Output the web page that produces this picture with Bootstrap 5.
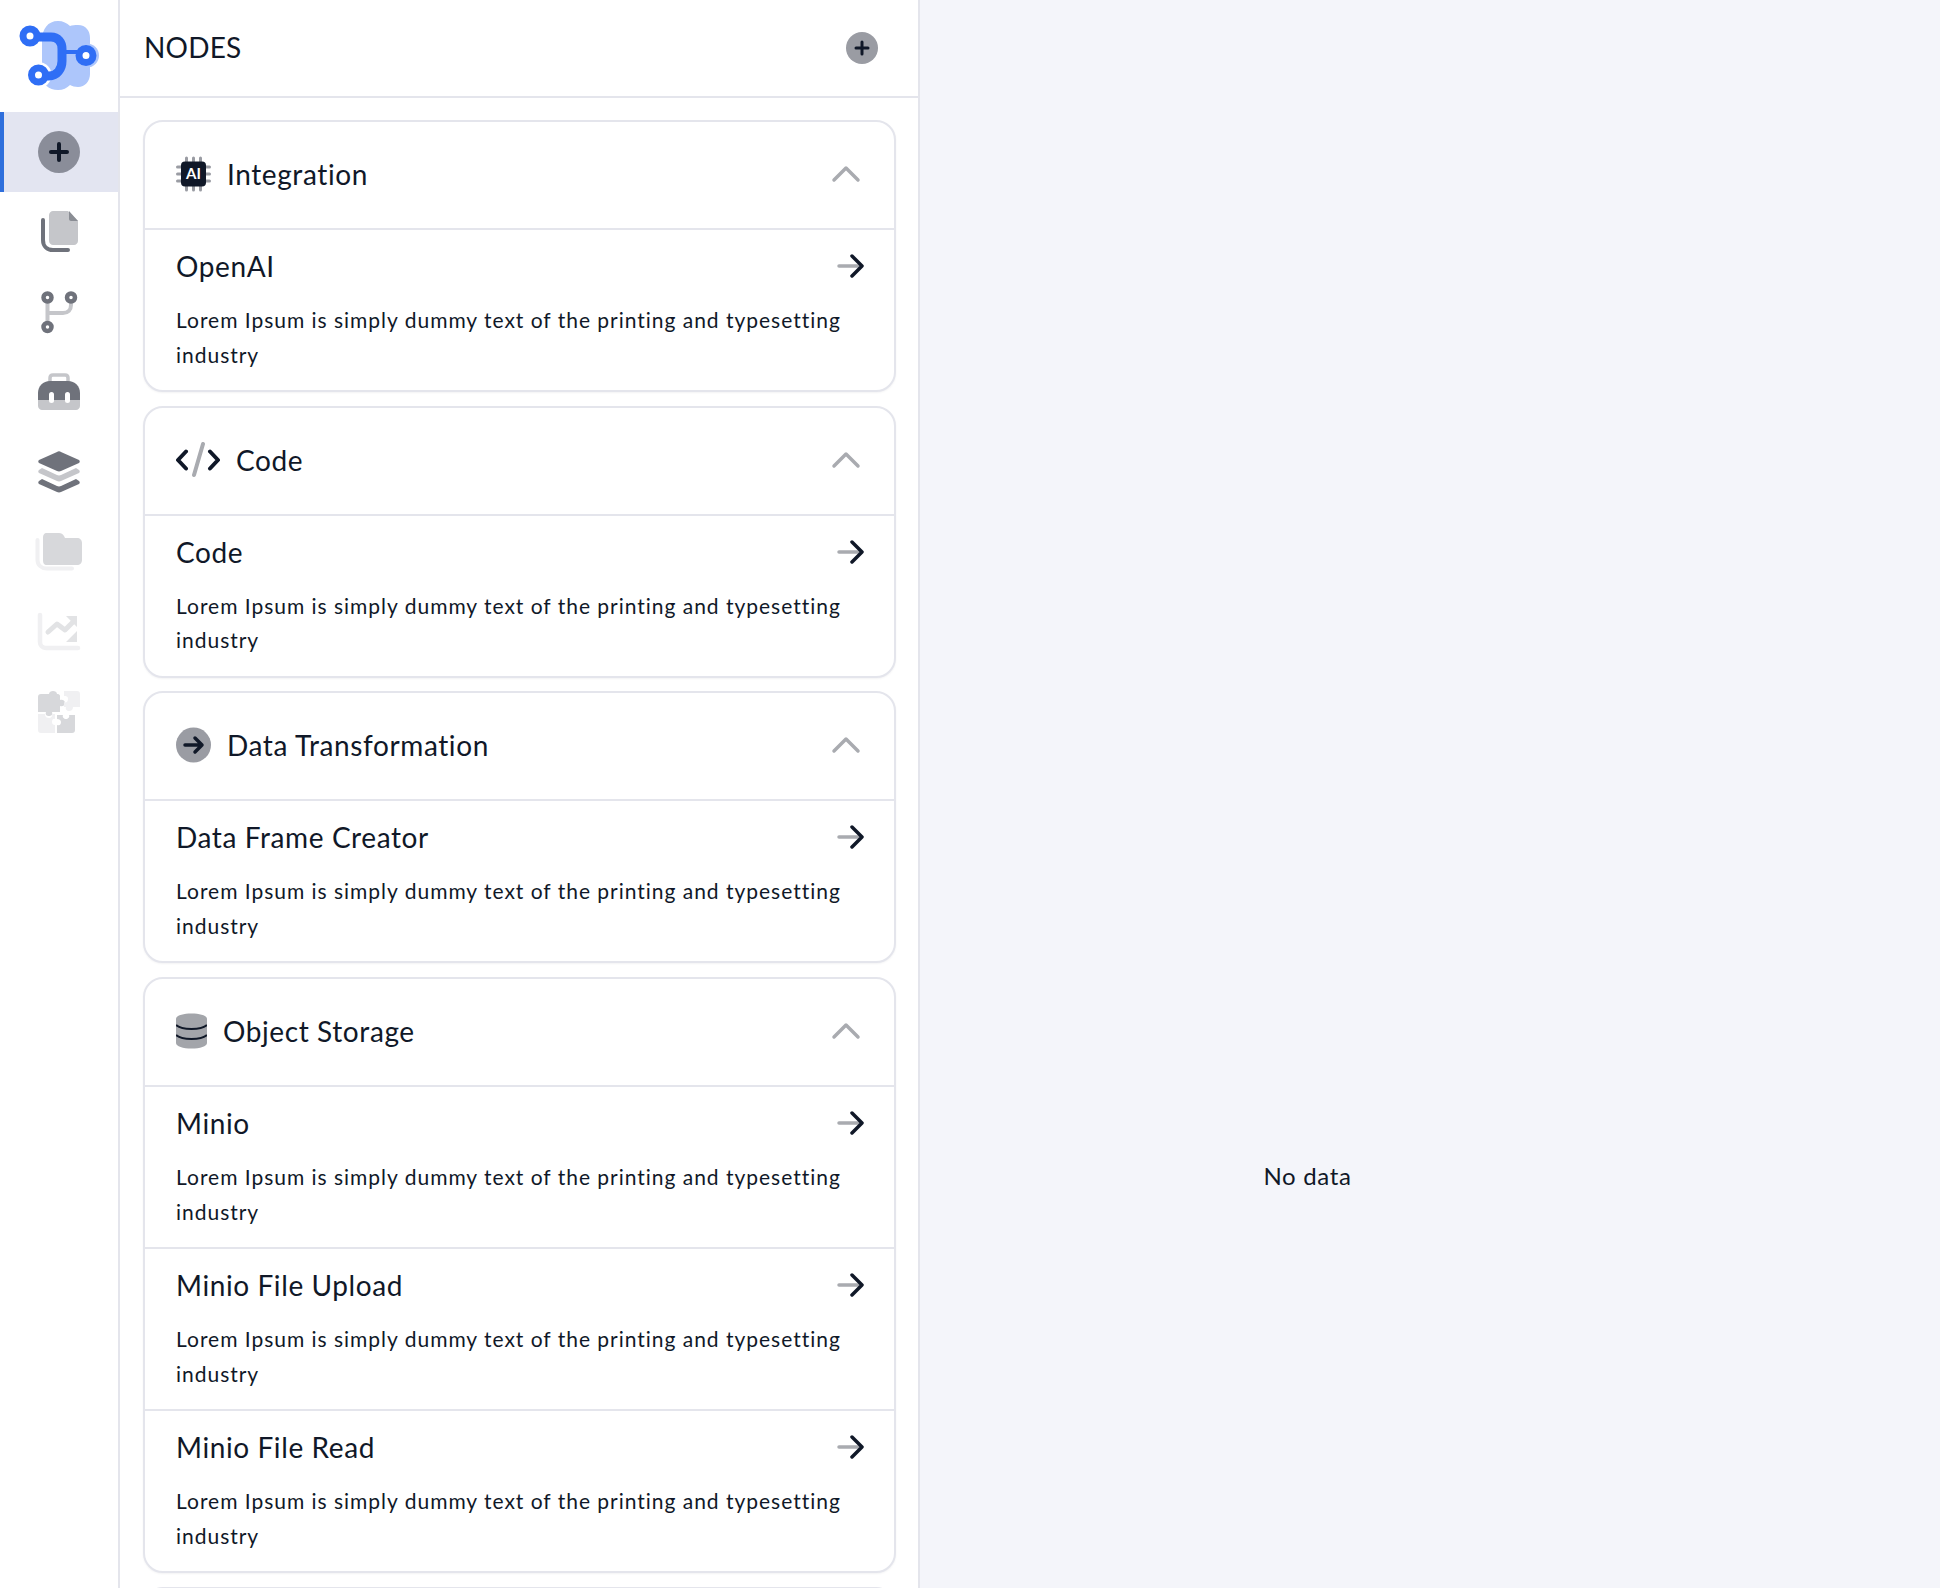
<!DOCTYPE html>
<html lang="en">
<head>
<meta charset="utf-8">
<title>Nodes</title>
<link href="https://cdn.jsdelivr.net/npm/bootstrap@5.3.0/dist/css/bootstrap.min.css" rel="stylesheet">
<style>
html,body{height:100%;}
body{font-family:Lato,"Liberation Sans",sans-serif;color:#101828;background:#f4f5fa;overflow:hidden;}
svg{display:block;flex:none;}
.side-rail{width:120px;flex:none;background:#fff;border-right:2px solid #e4e5ec;}
.rail-logo{height:112px;}
.rail-item{height:80px;}
.rail-item.is-on{background:#e3e5f1;box-shadow:inset 4px 0 0 #2f6fdc;}
.node-panel{width:800px;flex:none;background:#fff;border-right:2px solid #e4e5ec;}
.panel-head{height:98px;flex:none;padding:0 40px 0 24px;border-bottom:2px solid #e4e5ec;}
.panel-title{font-size:28px;line-height:36px;margin:0 0 2px;font-weight:400;letter-spacing:.2px;}
.panel-body-area{padding:22px 22.5px 0;gap:13.7px;overflow:hidden;flex:1 1 auto;min-height:0;}
.group-card{border:2px solid #e4e5ec;border-radius:20px;background:#fff;box-shadow:0 1px 2px rgba(16,24,40,.05);flex:none;overflow:hidden;}
.group-head{height:108px;padding:0 31.5px 2px;border-bottom:2px solid #e4e5ec;}
.group-name{font-size:28px;line-height:36px;letter-spacing:.6px;}
.group-item{height:160px;padding:18px 31.5px 0;}
.group-item+.group-item{height:162px;border-top:2px solid #e4e5ec;}
.item-name{font-size:28px;line-height:36px;letter-spacing:.6px;margin-bottom:19px;}
.item-text{font-size:21px;line-height:34.5px;letter-spacing:.98px;margin:0;}
.stub-card{height:120px;}
.empty-area{padding:764px 245px 0 0;font-size:24px;letter-spacing:.65px;}
.chip-label{font:700 15px Lato,"Liberation Sans",sans-serif;fill:#fff;}
.fold-mark{margin-right:1px;}
.go-mark{margin-right:-2.5px;}
</style>
</head>
<body>
<div class="d-flex vh-100 overflow-hidden">
  <nav class="side-rail d-flex flex-column">
    <div class="rail-logo">
      <svg width="118" height="112" viewBox="0 0 118 112" aria-label="logo">
        <path fill="#adc6fb" d="M42 40c0-11 6-19 16-19 5 0 9 2 12 5 2-1 5-1 8-1 8 0 12 6 12 13v36c0 7-5 13-12 13-3 0-6-1-8-2-3 3-7 5-12 5-9 0-16-6-16-14z"/>
        <circle cx="87" cy="55.500" r="12" fill="#adc6fb"/>
        <circle cx="38.500" cy="75" r="13" fill="#fff"/>
        <path fill="none" stroke="#2f6ef5" stroke-width="4" d="M62 52h15"/>
        <path fill="none" stroke="#2f6ef5" stroke-width="9" d="M34 37h17c7 0 11 5 11 12v12c0 8-5 15-13 15H42"/>
        <circle cx="30" cy="36" r="7" fill="#fff" stroke="#2f6ef5" stroke-width="7"/>
        <circle cx="38.500" cy="75" r="7" fill="#fff" stroke="#2f6ef5" stroke-width="7"/>
        <circle cx="86" cy="55.500" r="7" fill="#fff" stroke="#2f6ef5" stroke-width="7"/>
      </svg>
    </div>
    <div class="rail-item is-on">
      <svg width="118" height="80" viewBox="0 112 118 80">
        <circle cx="59" cy="152" r="21" fill="#8a8d99"/>
        <path stroke="#101828" stroke-width="4" stroke-linecap="round" d="M59 144v16M51 152h16"/>
      </svg>
    </div>
    <div class="rail-item">
      <svg width="118" height="80" viewBox="0 192 118 80">
        <path fill="none" stroke="#6f727b" stroke-width="4" stroke-linecap="round" d="M43 220v20c0 6 4 10 10 10h15"/>
        <path fill="#c5c6ca" d="M53 211h15l10 10v20c0 2-2 4-4 4H53c-2 0-4-2-4-4v-26c0-2 2-4 4-4z"/>
        <path fill="#8a8d94" d="M69 211l9 10h-7c-1 0-2-1-2-2z"/>
      </svg>
    </div>
    <div class="rail-item">
      <svg width="118" height="80" viewBox="0 272 118 80">
        <path fill="none" stroke="#c5c6ca" stroke-width="4" d="M47.500 303v19M71 303v2c0 5-3 8-8 8H47.500"/>
        <g fill="#fff" stroke="#6f727b" stroke-width="4.500">
          <circle cx="47.500" cy="297.500" r="4"/>
          <circle cx="71" cy="297.500" r="4"/>
          <circle cx="47.500" cy="327" r="4"/>
        </g>
      </svg>
    </div>
    <div class="rail-item">
      <svg width="118" height="80" viewBox="0 352 118 80">
        <path fill="none" stroke="#c5c6ca" stroke-width="3.500" d="M50 384v-6c0-2 1-3 3-3h12c2 0 3 1 3 3v6"/>
        <path fill="#6f727b" d="M50 381h18c7 0 12 5 12 12v7H38v-7c0-7 5-12 12-12z"/>
        <path fill="#c5c6ca" d="M38 400h42v6c0 2-2 4-4 4H42c-2 0-4-2-4-4z"/>
        <rect x="49" y="392" width="5" height="11" rx="2.500" fill="#fff"/>
        <rect x="65" y="392" width="5" height="11" rx="2.500" fill="#fff"/>
      </svg>
    </div>
    <div class="rail-item">
      <svg width="118" height="80" viewBox="0 432 118 80">
        <path fill="#6f727b" d="M57 452c1-1 3-1 4 0l18 8c1 1 1 2 0 3l-18 8c-1 .5-3 .5-4 0l-18-8c-1-1-1-2 0-3z"/>
        <path fill="#c5c6ca" d="M42 468l15 7c1 .5 3 .5 4 0l15-7 3 2c1 1 1 2 0 3l-18 8c-1 .5-3 .5-4 0l-18-8c-1-1-1-2 0-3z"/>
        <path fill="#6f727b" d="M42 479l15 7c1 .5 3 .5 4 0l15-7 3 2c1 1 1 2 0 3l-18 8c-1 .5-3 .5-4 0l-18-8c-1-1-1-2 0-3z"/>
      </svg>
    </div>
    <div class="rail-item">
      <svg width="118" height="80" viewBox="0 512 118 80">
        <path fill="none" stroke="#f0f0f2" stroke-width="4" stroke-linecap="round" d="M37.500 540v20c0 5 4 8.500 9 8.500H72"/>
        <path fill="#d7d8db" d="M47 533h12c2 0 4 1 5 3l1 2h12c3 0 5 2 5 5v17c0 3-2 5-5 5H47c-3 0-4-2-4-5v-22c0-3 1-5 4-5z"/>
      </svg>
    </div>
    <div class="rail-item">
      <svg width="118" height="80" viewBox="0 592 118 80">
        <path fill="none" stroke="#f0f0f2" stroke-width="4.500" stroke-linecap="round" d="M40 615v27c0 3 2 6 6 6h32"/>
        <path fill="none" stroke="#e2e3e5" stroke-width="5" stroke-linecap="round" stroke-linejoin="round" d="M48 632l9-8 8 6 9-9"/>
        <path fill="#e2e3e5" d="M66 616h11v11zM77 642H66l11-11z"/>
      </svg>
    </div>
    <div class="rail-item">
      <svg width="118" height="80" viewBox="0 672 118 80">
        <path fill="#d7d8db" d="M38 697c0-2 1-3 3-3h8c0-2 2-3 4-3s4 1 4 3h1c1 0 2 1 2 2v4c3-1 5 1 5 3s-2 4-5 3v6h-8c1 3-1 4-3 4s-4-1-3-4h-8z"/>
        <path fill="#f0f0f2" d="M64 691h13c2 0 3 1 3 3v13h-7c0 3-2 4-4 4s-4-2-3-4h-2v-5c2 1 4 0 4-3s-2-3-4-3z"/>
        <path fill="#f0f0f2" d="M38 714h7c0 3 2 4 4 4s4-2 3-4h3v5c-2-1-3 1-3 3s1 3 3 3v8H41c-2 0-3-1-3-3z"/>
        <path fill="#d7d8db" d="M57 715h6c-1 2 1 4 3 4s4-2 3-4h6v15c0 2-1 3-3 3H57v-8c3 1 4-1 4-3s-2-3-4-3z"/>
      </svg>
    </div>
  </nav>

  <section class="node-panel d-flex flex-column">
    <header class="panel-head d-flex align-items-center justify-content-between">
      <h1 class="panel-title">NODES</h1>
      <svg width="32" height="32" viewBox="0 0 32 32">
        <circle cx="16" cy="16" r="16" fill="#9a9ca3"/>
        <path stroke="#101828" stroke-width="3" stroke-linecap="round" d="M16 10v12M10 16h12"/>
      </svg>
    </header>
    <div class="panel-body-area d-flex flex-column">

      <div class="group-card">
        <div class="group-head d-flex align-items-center">
          <svg width="35" height="36" viewBox="0 0 35 36" class="me-3">
            <path stroke="#9a9ca3" stroke-width="3" stroke-linecap="round" d="M10.500 2v4M17.500 2v4M24.500 2v4M10.500 30v4M17.500 30v4M24.500 30v4M1.500 11h4M1.500 18h4M1.500 25h4M29.500 11h4M29.500 18h4M29.500 25h4"/>
            <rect x="5" y="5.500" width="25" height="25" rx="4" fill="#101828"/>
            <text x="17.500" y="23.300" text-anchor="middle" class="chip-label">AI</text>
          </svg>
          <span class="group-name flex-grow-1">Integration</span>
          <svg class="fold-mark" width="30" height="18" viewBox="0 0 30 18"><path fill="none" stroke="#a9abb0" stroke-width="3.500" stroke-linecap="round" stroke-linejoin="round" d="M3 15L15 3l12 12"/></svg>
        </div>
        <div class="group-item">
          <div class="d-flex align-items-center justify-content-between item-name"><span>OpenAI</span>
            <svg class="go-mark" width="28" height="24" viewBox="0 0 28 24"><path stroke="#a9abb0" stroke-width="3.500" stroke-linecap="round" d="M2 12h22"/><path fill="none" stroke="#101828" stroke-width="3.500" stroke-linecap="round" stroke-linejoin="round" d="M15 2l10 10-10 10"/></svg>
          </div>
          <p class="item-text">Lorem Ipsum is simply dummy text of the printing and typesetting industry</p>
        </div>
      </div>

      <div class="group-card">
        <div class="group-head d-flex align-items-center">
          <svg width="44" height="36" viewBox="0 0 44 36" class="me-3">
            <path fill="none" stroke="#101828" stroke-width="4" stroke-linecap="round" stroke-linejoin="round" d="M10 9.500L2 18l8 8.500M34 9.500l8 8.500-8 8.500"/>
            <path stroke="#a9abb0" stroke-width="4" stroke-linecap="round" d="M27 2L18 33"/>
          </svg>
          <span class="group-name flex-grow-1">Code</span>
          <svg class="fold-mark" width="30" height="18" viewBox="0 0 30 18"><path fill="none" stroke="#a9abb0" stroke-width="3.500" stroke-linecap="round" stroke-linejoin="round" d="M3 15L15 3l12 12"/></svg>
        </div>
        <div class="group-item">
          <div class="d-flex align-items-center justify-content-between item-name"><span>Code</span>
            <svg class="go-mark" width="28" height="24" viewBox="0 0 28 24"><path stroke="#a9abb0" stroke-width="3.500" stroke-linecap="round" d="M2 12h22"/><path fill="none" stroke="#101828" stroke-width="3.500" stroke-linecap="round" stroke-linejoin="round" d="M15 2l10 10-10 10"/></svg>
          </div>
          <p class="item-text">Lorem Ipsum is simply dummy text of the printing and typesetting industry</p>
        </div>
      </div>

      <div class="group-card">
        <div class="group-head d-flex align-items-center">
          <svg width="35" height="36" viewBox="0 0 35 36" class="me-3">
            <circle cx="17.500" cy="18" r="17.500" fill="#9a9ca3"/>
            <path fill="none" stroke="#101828" stroke-width="3.500" stroke-linecap="round" stroke-linejoin="round" d="M9 18h17M19 11l7 7-7 7"/>
          </svg>
          <span class="group-name flex-grow-1">Data Transformation</span>
          <svg class="fold-mark" width="30" height="18" viewBox="0 0 30 18"><path fill="none" stroke="#a9abb0" stroke-width="3.500" stroke-linecap="round" stroke-linejoin="round" d="M3 15L15 3l12 12"/></svg>
        </div>
        <div class="group-item">
          <div class="d-flex align-items-center justify-content-between item-name"><span>Data Frame Creator</span>
            <svg class="go-mark" width="28" height="24" viewBox="0 0 28 24"><path stroke="#a9abb0" stroke-width="3.500" stroke-linecap="round" d="M2 12h22"/><path fill="none" stroke="#101828" stroke-width="3.500" stroke-linecap="round" stroke-linejoin="round" d="M15 2l10 10-10 10"/></svg>
          </div>
          <p class="item-text">Lorem Ipsum is simply dummy text of the printing and typesetting industry</p>
        </div>
      </div>

      <div class="group-card">
        <div class="group-head d-flex align-items-center">
          <svg width="31" height="36" viewBox="0 0 31 36" class="me-3">
            <path fill="#a3a5aa" d="M0 6C0 2.500 7 .500 15.500.500S31 2.500 31 6v24c0 3.500-7 5.500-15.500 5.500S0 33.500 0 30z"/>
            <path fill="none" stroke="#101828" stroke-width="2" d="M0 12c3 3 9 4 15.500 4S28 15 31 12M0 22c3 3 9 4 15.500 4S28 25 31 22"/>
          </svg>
          <span class="group-name flex-grow-1">Object Storage</span>
          <svg class="fold-mark" width="30" height="18" viewBox="0 0 30 18"><path fill="none" stroke="#a9abb0" stroke-width="3.500" stroke-linecap="round" stroke-linejoin="round" d="M3 15L15 3l12 12"/></svg>
        </div>
        <div class="group-item">
          <div class="d-flex align-items-center justify-content-between item-name"><span>Minio</span>
            <svg class="go-mark" width="28" height="24" viewBox="0 0 28 24"><path stroke="#a9abb0" stroke-width="3.500" stroke-linecap="round" d="M2 12h22"/><path fill="none" stroke="#101828" stroke-width="3.500" stroke-linecap="round" stroke-linejoin="round" d="M15 2l10 10-10 10"/></svg>
          </div>
          <p class="item-text">Lorem Ipsum is simply dummy text of the printing and typesetting industry</p>
        </div>
        <div class="group-item">
          <div class="d-flex align-items-center justify-content-between item-name"><span>Minio File Upload</span>
            <svg class="go-mark" width="28" height="24" viewBox="0 0 28 24"><path stroke="#a9abb0" stroke-width="3.500" stroke-linecap="round" d="M2 12h22"/><path fill="none" stroke="#101828" stroke-width="3.500" stroke-linecap="round" stroke-linejoin="round" d="M15 2l10 10-10 10"/></svg>
          </div>
          <p class="item-text">Lorem Ipsum is simply dummy text of the printing and typesetting industry</p>
        </div>
        <div class="group-item">
          <div class="d-flex align-items-center justify-content-between item-name"><span>Minio File Read</span>
            <svg class="go-mark" width="28" height="24" viewBox="0 0 28 24"><path stroke="#a9abb0" stroke-width="3.500" stroke-linecap="round" d="M2 12h22"/><path fill="none" stroke="#101828" stroke-width="3.500" stroke-linecap="round" stroke-linejoin="round" d="M15 2l10 10-10 10"/></svg>
          </div>
          <p class="item-text">Lorem Ipsum is simply dummy text of the printing and typesetting industry</p>
        </div>
      </div>

      <div class="group-card stub-card"></div>
    </div>
  </section>

  <main class="empty-area flex-grow-1 d-flex align-items-center justify-content-center">No data</main>
</div>
</body>
</html>
